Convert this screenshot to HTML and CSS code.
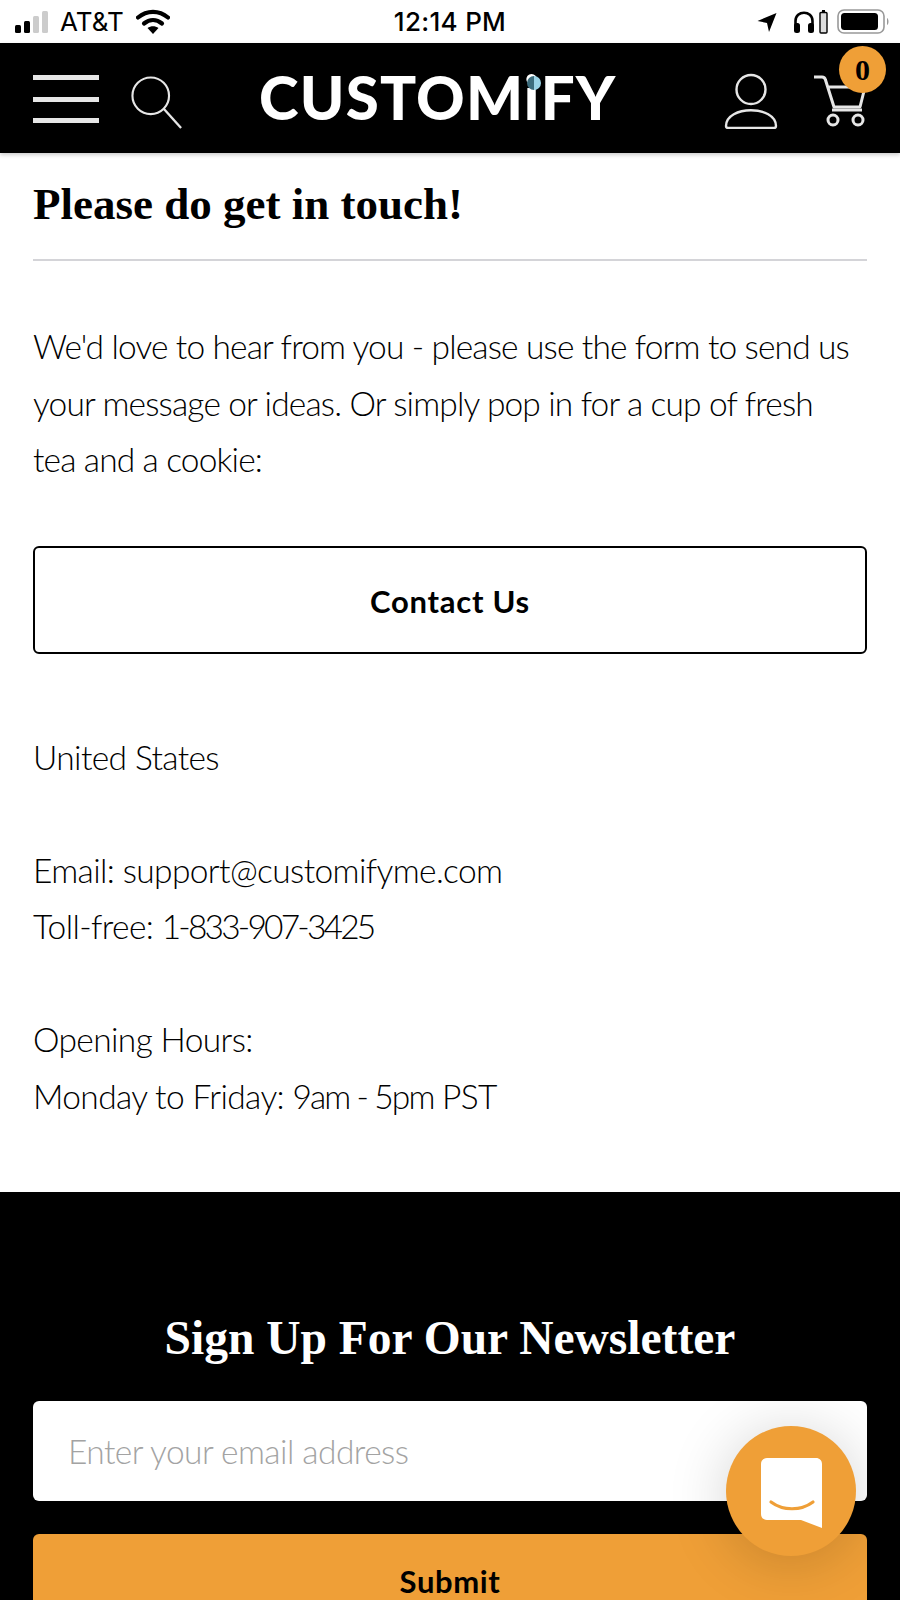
FILE: index.html
```html
<!DOCTYPE html>
<html lang="en">
<head>
<meta charset="utf-8">
<title>Customify - Contact</title>
<link rel="stylesheet" href="styles.css">
</head>
<body>
<div class="status">
  <div class="status-left">
    <svg class="signal" width="34" height="24" viewBox="0 0 34 24"><rect x="0" y="15" width="6" height="8" rx="1.5" fill="#000"/><rect x="9" y="11" width="6" height="12" rx="1.5" fill="#000"/><rect x="18" y="6" width="6" height="17" rx="1.5" fill="#ccc"/><rect x="27" y="1" width="6" height="22" rx="1.5" fill="#ccc"/></svg>
    <span class="carrier">AT&amp;T</span>
    <svg class="wifi" width="34" height="26" viewBox="0 0 34 26"><path d="M2 8.500C11 1 23 1 32 8.500" fill="none" stroke="#000" stroke-width="4.200" stroke-linecap="round"/><path d="M8 14.500C13.500 10 20.500 10 26 14.500" fill="none" stroke="#000" stroke-width="4.200" stroke-linecap="round"/><path d="M11.500 19 17 25 22.500 19C19 16.500 15 16.500 11.500 19Z" fill="#000"/></svg>
  </div>
  <div class="time">12:14 PM</div>
  <div class="status-right">
    <svg class="arrow" width="20" height="20" viewBox="0 0 20 20"><path d="M0.500 9 19.500 1 12 20 10 11Z" fill="#000"/></svg>
    <svg class="phones" width="22" height="24" viewBox="0 0 22 24"><path d="M2.500 18V11C2.500 0 19.500 0 19.500 11V18" fill="none" stroke="#000" stroke-width="2.600"/><rect x="1" y="13" width="6" height="10" rx="2.500" fill="#000"/><rect x="15" y="13" width="6" height="10" rx="2.500" fill="#000"/></svg>
    <svg class="small-batt" width="9" height="24" viewBox="0 0 9 24"><rect x="3" y="0" width="3" height="2" fill="#000"/><rect x="1" y="2.500" width="7" height="20.500" rx="1" fill="#ddd" stroke="#000" stroke-width="1.400"/></svg>
    <svg class="battery" width="54" height="26" viewBox="0 0 54 26"><rect x="1" y="1" width="46" height="23" rx="6" fill="none" stroke="#999" stroke-width="1.600"/><rect x="4" y="4" width="37" height="17" rx="3.500" fill="#000"/><path d="M50 9C52 10 52 15 50 16Z" fill="#999"/></svg>
  </div>
</div>

<header class="nav">
  <div class="nav-left">
    <div class="burger"><span></span><span></span><span></span></div>
    <svg class="search" width="52" height="54" viewBox="0 0 54 56"><circle cx="20.500" cy="20.500" r="19" fill="none" stroke="#e6e6e6" stroke-width="2.200"/><path d="M34 34 52 54" stroke="#e6e6e6" stroke-width="2.400"/></svg>
  </div>
  <div class="logo">CUSTOM<span class="logo-i">i<span class="logo-dot"></span></span>FY</div>
  <div class="nav-right">
    <svg class="user" width="54" height="56" viewBox="0 0 54 56"><circle cx="27" cy="16.500" r="14.500" fill="none" stroke="#e6e6e6" stroke-width="2.400"/><path d="M2 53C2 32 52 32 52 53C52 54.500 51 55 50 55H4C3 55 2 54.500 2 53Z" fill="none" stroke="#e6e6e6" stroke-width="2.400"/></svg>
    <div class="cart">
      <svg width="54" height="52" viewBox="0 0 54 52"><path d="M1 2H9C11 2 12 3 12.500 5L21 32H47L52 12H14" fill="none" stroke="#e6e6e6" stroke-width="3" stroke-linejoin="round"/><path d="M19 35H49" stroke="#e6e6e6" stroke-width="3"/><circle cx="20" cy="45" r="5" fill="none" stroke="#e6e6e6" stroke-width="3"/><circle cx="45" cy="45" r="5" fill="none" stroke="#e6e6e6" stroke-width="3"/></svg>
      <span class="badge">0</span>
    </div>
  </div>
</header>

<main class="content">
  <h1 class="title">Please do get in touch!</h1>
  <p class="intro">We'd love to hear from you - please use the form to send us<br>your message or ideas. Or simply pop in for a cup of fresh<br>tea and a cookie:</p>
  <a class="contact-btn">Contact Us</a>
  <p class="address">United States<br><br>Email: support@customifyme.com<br>Toll-free: <span class="nums">1-833-907-3425</span><br><br>Opening Hours:<br>Monday to Friday: <span class="hours">9am - 5pm</span> PST</p>
</main>

<footer class="footer">
  <h2 class="news-title">Sign Up For Our Newsletter</h2>
  <div class="email-input">Enter your email address</div>
  <div class="submit">Submit</div>
</footer>

<div class="chat">
  <svg width="62" height="72" viewBox="0 0 62 72"><path d="M6 0H55C58.500 0 61 2.500 61 6V70L40 62H6C2.500 62 0 59.500 0 56V6C0 2.500 2.500 0 6 0Z" fill="#fff"/><path d="M10 44C22 53 40 53 52 44" fill="none" stroke="#ef9f37" stroke-width="3.200" stroke-linecap="round"/></svg>
</div>
</body>
</html>
```
FILE: styles.css
```css
* { box-sizing: border-box; }
html, body { margin: 0; padding: 0; }
body { width: 900px; height: 1600px; overflow: hidden; background: #fff; color: #000; font-family: "Lato", sans-serif; position: relative; }

.status { height: 43px; display: grid; grid-template-columns: 1fr auto 1fr; align-items: center; padding: 0 9px 0 15px; font-family: "Inter", sans-serif; font-size: 26px; font-weight: 500; }
.status-left { display: flex; align-items: center; gap: 8px; }
.carrier { font-weight: 400; margin-left: 3px; }
.wifi { margin-left: 4px; }
.time { text-align: center; padding-right: 6px; letter-spacing: .3px; }
.status-right { display: flex; align-items: center; justify-content: flex-end; gap: 10px; }
.arrow { margin-right: 2px; }
.phones { margin-left: 4px; margin-right: -6px; }
.small-batt { margin-right: -1px; }

.nav { height: 110px; background: #000; display: flex; align-items: center; justify-content: space-between; padding: 0 33px; position: relative; box-shadow: 0 2px 4px rgba(0,0,0,.2); }
.nav-left { display: flex; align-items: center; gap: 32px; margin-top: 2px; }
.burger { width: 66px; height: 48px; display: flex; flex-direction: column; justify-content: space-between; }
.burger span { display: block; height: 5px; background: #e6e6e6; }
.search { margin-top: 7px; }
.logo { position: absolute; left: 259px; top: 14px; font-family: "Lato", sans-serif; font-weight: 900; font-size: 60px; line-height: 80px; letter-spacing: 1.200px; color: #fff; white-space: nowrap; }
.logo-i { position: relative; }
.logo-dot { position: absolute; left: 3px; top: 15px; width: 14px; height: 14px; border-radius: 50%; background: linear-gradient(90deg, #3d6d7d 50%, #9ad3e6 50%); }
.nav-right { display: flex; align-items: center; gap: 35px; margin-top: 6px; }
.cart { position: relative; width: 54px; height: 52px; }
.cart svg { display: block; }
.badge { position: absolute; left: 26px; top: -29px; width: 47px; height: 47px; border-radius: 50%; background: #ef9f37; font-family: "Liberation Serif", serif; font-weight: 700; font-size: 30px; line-height: 47px; text-align: center; color: #000; }

.content { padding: 0 33px; }
.title { margin: 0; height: 108px; padding-top: 25px; border-bottom: 2.500px solid #d4d4d8; font-family: "Liberation Serif", serif; font-weight: 700; font-size: 45px; line-height: 52px; }
.intro { margin: 57px 0 0; font-size: 33.500px; line-height: 56.500px; font-weight: 300; letter-spacing: -.85px; }
.contact-btn { display: flex; align-items: center; justify-content: center; height: 108px; margin-top: 58px; border: 2px solid #000; border-radius: 6px; font-size: 31px; font-weight: 700; letter-spacing: .75px; padding-top: 2px; }
.address { margin: 75px 0 0; font-size: 33.500px; line-height: 56.500px; font-weight: 300; letter-spacing: -.62px; }
.nums { letter-spacing: -2.800px; }
.hours { letter-spacing: -1.900px; }

.footer { position: absolute; left: 0; right: 0; top: 1192px; height: 408px; background: #000; padding: 0 33px; overflow: hidden; }
.news-title { margin: 116px 0 0; height: 93px; text-align: center; color: #fff; font-family: "Liberation Serif", serif; font-weight: 700; font-size: 47.500px; line-height: 60px; }
.email-input { height: 100px; background: #fff; border-radius: 6px; display: flex; align-items: center; padding-left: 35px; color: #a3a3a3; font-size: 33.500px; font-weight: 300; letter-spacing: -.55px; }
.submit { height: 100px; margin-top: 33px; background: #ef9f37; border-radius: 6px; padding-top: 28px; text-align: center; font-size: 31px; font-weight: 700; letter-spacing: .6px; color: #000; }

.chat { position: absolute; left: 726px; top: 1426px; width: 130px; height: 130px; border-radius: 50%; background: #ef9f37; display: flex; align-items: center; justify-content: center; box-shadow: 0 6px 60px rgba(0,0,0,.18); padding: 6px 0 0 2px; }
```
